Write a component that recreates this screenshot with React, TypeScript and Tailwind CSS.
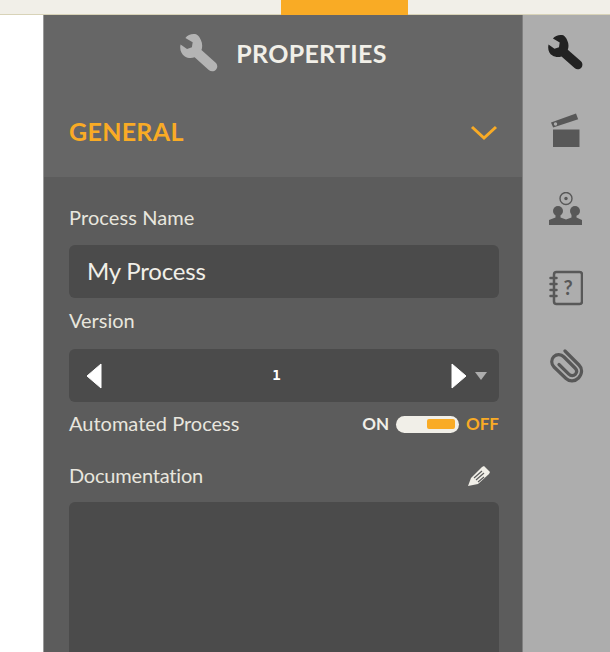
const font = "font-['Lato','Open_Sans',sans-serif]";

function Wrench({ className, fill }: { className: string; fill: string }) {
  return (
    <svg viewBox="0 0 40 40" className={className}>
      <path
        fill={fill}
        d="M17 1.500c-4-1.200-9 .2-11.500 3.500L13 9.500l-.8 5.200-5 1.800L.6 11.800C-.6 16.500 1 21.500 5 24c3 1.900 6.700 2.100 10 .9l14.500 13c2.200 1.900 5.300 1.800 7.300-.2 2-2.100 1.900-5.300-.2-7.300L22 17.500c1.200-3.400 1-7.200-.6-10.300C20.500 5 19 2.500 17 1.500z"
      />
    </svg>
  );
}

function Nav() {
  return (
    <div className="w-[88px] h-full bg-[#adadad] border-l border-[#808080] flex flex-col items-center pt-[19px] shrink-0 pr-[2px]">
      <Wrench className="w-[36px] h-[36px]" fill="#222222" />
      <svg viewBox="0 0 30 36" className="w-[30px] h-[36px] mt-[43px]">
        <path fill="#585858" d="M2 16.500h26.500V34H2z" />
        <path fill="#585858" d="M0 9.500 25 .5l2.200 5.800-25 8.200z" />
        <circle cx="4.500" cy="11" r="1.700" fill="#adadad" />
      </svg>
      <svg viewBox="0 0 34 36" className="w-[34px] h-[36px] mt-[43px]">
        <circle cx="17" cy="6.500" r="6" fill="none" stroke="#585858" strokeWidth="1.400" />
        <circle cx="17" cy="6.500" r="1.700" fill="#585858" />
        <circle cx="9" cy="19" r="5" fill="#585858" />
        <circle cx="26" cy="19" r="5" fill="#585858" />
        <path fill="#585858" d="M6.500 21h5v4.500l5.500 2 5.500-2V21h5v4.500l5.500 2.500v5H0v-5l6.500-2.500z" />
      </svg>
      <svg viewBox="0 0 34 36" className="w-[34px] h-[36px] mt-[42px]">
        <rect x="5" y="2" width="28" height="32" rx="2.500" fill="none" stroke="#585858" strokeWidth="2.500" />
        <path stroke="#585858" strokeWidth="2.500" strokeLinecap="round" d="M1.500 8h6M1.500 14h6M1.500 20h6M1.500 26h6" />
        <text x="19" y="25" textAnchor="middle" fontSize="20" fontWeight="700" fill="#585858" fontFamily="Lato">?</text>
      </svg>
      <svg viewBox="0 0 36 36" className="w-[36px] h-[36px] mt-[43px]">
        <path
          fill="none"
          stroke="#585858"
          strokeWidth="3.200"
          strokeLinecap="round"
          d="M17 2 31 16c3.500 3.500 3.500 9-.5 13-3.800 3.800-9 3.800-12.500.500L6 18c-3-3-3-7.500-.2-10.300S13 5 16 8l11 11c2 2 2 4.500.3 6.300s-4.500 1.800-6.500-.2L11 15.500"
        />
      </svg>
    </div>
  );
}

export default function App() {
  return (
    <div className={`w-[610px] h-[652px] overflow-hidden bg-white flex flex-col ${font}`}>
      <div className="h-[15px] shrink-0 bg-[#f1efe8] border-b border-[#d8d3b8] pl-[281px]">
        <div className="w-[127px] h-[15px] bg-[#f9ab25]" />
      </div>
      <div className="flex-1 min-h-0 flex">
        <div className="w-[44px] h-full shrink-0 bg-white border-r border-[#9a9a9a]" />
        <div className="w-[478px] shrink-0 h-full flex flex-col bg-[#5c5c5c]">
          <div className="h-[162px] shrink-0 bg-[#666666] flex flex-col">
            <div className="flex items-center justify-center gap-[17px] pt-[18px] pl-[1px]">
              <Wrench className="w-[39px] h-[39px]" fill="#b4b4b4" />
              <span className="text-[25px] leading-[36px] font-bold text-[#f1efe8] tracking-[0.3px]">PROPERTIES</span>
            </div>
            <div className="flex items-center justify-between pl-[25px] pr-[24px] mt-[44px]">
              <span className="text-[25px] leading-[30px] font-bold text-[#f9ab25] tracking-[0.3px]">GENERAL</span>
              <svg viewBox="0 0 28 16" className="w-[28px] h-[16px] mt-[3px]">
                <path d="M2 2l12 11L26 2" fill="none" stroke="#f9ab25" strokeWidth="3" />
              </svg>
            </div>
          </div>
          <div className="pl-[25px] pr-[23px] flex flex-col">
            <div className="mt-[28px] text-[20px] leading-[24px] text-[#e8e6de] tracking-[0.1px]">Process Name</div>
            <div className="mt-[16px] h-[53px] rounded-[6px] bg-[#4b4b4b] flex items-center pl-[18px] pb-[2px] text-[24px] text-[#f1efe8] tracking-[-0.2px]">
              My Process
            </div>
            <div className="mt-[10px] text-[20px] leading-[24px] text-[#e8e6de]">Version</div>
            <div className="mt-[17px] h-[53px] rounded-[6px] bg-[#4b4b4b] flex items-center pl-[17px] pr-[12px] text-white">
              <svg viewBox="0 0 16 26" className="w-[16px] h-[26px]">
                <path d="M15 1 1 13l14 12z" fill="#ffffff" stroke="#ffffff" strokeLinejoin="round" />
              </svg>
              <span className="flex-1 text-center font-['DejaVu_Sans_Mono',monospace] text-[14px] font-bold">1</span>
              <svg viewBox="0 0 16 26" className="w-[16px] h-[26px]">
                <path d="M1 1l14 12L1 25z" fill="#ffffff" stroke="#ffffff" strokeLinejoin="round" />
              </svg>
              <svg viewBox="0 0 12 8" className="w-[12px] h-[8px] ml-[8px]">
                <path d="M0 0h12L6 8z" fill="#adadad" />
              </svg>
            </div>
            <div className="mt-[10px] h-[24px] flex items-center">
              <span className="text-[20px] text-[#e8e6de] pb-[2px]">Automated Process</span>
              <span className="ml-auto text-[17px] font-bold text-[#f1efe8]">ON</span>
              <span className="ml-[7px] w-[63px] h-[17px] rounded-full bg-[#f1efe8] flex justify-end items-center pr-[4px]">
                <span className="w-[28px] h-[10px] rounded-[2px] bg-[#f9ab25]" />
              </span>
              <span className="ml-[7px] text-[17px] font-bold text-[#f9ab25]">OFF</span>
            </div>
            <div className="mt-[28px] h-[24px] flex items-center justify-between pr-[8px]">
              <span className="text-[20px] text-[#e8e6de] pb-[2px] tracking-[-0.2px]">Documentation</span>
              <svg viewBox="0 0 24 22" className="w-[24px] h-[22px]">
                <path d="M1 21l3-8L15 2l2-1 6 6-1 2-11 10z" fill="#f1efe8" />
                <path d="M7 13l8-7M9 15l8-7M11 17l6-5" stroke="#5c5c5c" strokeWidth="1.200" />
              </svg>
            </div>
            <div className="mt-[14px] h-[200px] rounded-t-[6px] bg-[#4b4b4b]" />
          </div>
        </div>
        <Nav />
      </div>
    </div>
  );
}
